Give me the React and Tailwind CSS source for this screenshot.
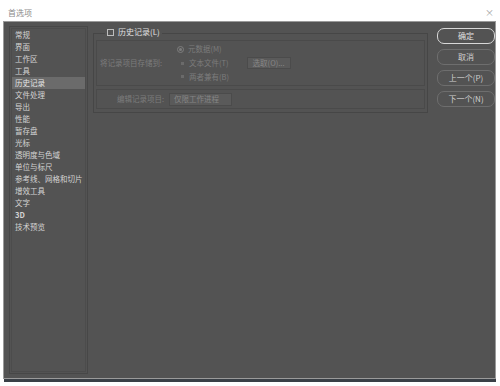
import React from "react";

const items = [
  "常规", "界面", "工作区", "工具", "历史记录", "文件处理", "导出", "性能", "暂存盘",
  "光标", "透明度与色域", "单位与标尺", "参考线、网格和切片", "增效工具", "文字", "3D", "技术预览",
];

const font = { fontFamily: '"Noto Sans CJK SC", "Noto Sans", sans-serif' };

function SideButton({ children, primary }) {
  return (
    <div
      className={`h-[16px] w-[58px] rounded-[7px] border flex items-center justify-center text-[8px] leading-none ${
        primary ? "border-[#d8d8d8] text-[#e0e0e0]" : "border-[#6e6e6e] text-[#d0d0d0]"
      }`}
    >
      {children}
    </div>
  );
}

export default function App() {
  return (
    <div className="w-[500px] h-[386px] bg-white relative overflow-hidden" style={font}>
      <div className="h-[21px] flex items-center justify-between pl-[8px] pr-[6px]">
        <span className="text-[8px] text-[#8a8a8a] leading-none mt-[4px]">首选项</span>
        <span className="text-[9px] text-[#a0a0a0] leading-none mt-[4px]">×</span>
      </div>

      <div className="ml-[3px] mr-[4px] h-[358px] bg-[#535353] border border-[#9a9a9a] flex">
        {/* left list */}
        <div className="ml-[5px] mt-[4px] w-[79px] h-[348px] border border-[#474747] p-[1px]">
          <div className="w-full h-full border border-[#4c4c4c] flex flex-col">
            {items.map((it) => (
              <div
                key={it}
                className={`h-[12px] flex items-center pl-[3px] text-[7.5px] leading-none ${
                  it === "历史记录" ? "bg-[#6b6b6b] text-[#e6e6e6]" : "text-[#d4d4d4]"
                } ${it === "3D" ? "font-bold" : ""}`}
              >
                {it}
              </div>
            ))}
          </div>
        </div>

        {/* main */}
        <div className="ml-[5px] mt-[11px] w-[335px] h-[80px] border border-[#464646] relative">
          <div className="absolute -top-[6px] left-[11px] bg-[#535353] px-[2px] flex items-center gap-[4px]">
            <div className="w-[7px] h-[7px] border border-[#bdbdbd]" />
            <span className="text-[8px] text-[#e0e0e0] leading-none">历史记录(L)</span>
          </div>

          <div className="mx-[2px] mt-[6px] h-[46px] border border-[#4a4a4a] relative">
            <div className="flex items-center gap-[4px] ml-[80px] mt-[3px] h-[10px]">
              <div className="w-[7px] h-[7px] rounded-full border border-[#7e7e7e] flex items-center justify-center">
                <div className="w-[3px] h-[3px] rounded-full bg-[#7e7e7e]" />
              </div>
              <span className="text-[7.5px] text-[#7c7c7c] leading-none">元数据(M)</span>
            </div>
            <div className="flex items-center h-[14px] mt-[2px]">
              <span className="ml-[3px] w-[79px] text-[7.5px] text-[#7c7c7c] leading-none">将记录项目存储到:</span>
              <div className="w-[3px] h-[3px] bg-[#6a6a6a] ml-[2px]" />
              <span className="ml-[5px] text-[7.5px] text-[#7c7c7c] leading-none">文本文件(T)</span>
              <div className="ml-[18px] w-[44px] h-[12px] bg-[#5a5a5a] border border-[#4b4b4b] flex items-center justify-center text-[7.5px] text-[#888] leading-none">
                选取(O)...
              </div>
            </div>
            <div className="flex items-center h-[11px] mt-[1px]">
              <div className="ml-[84px] w-[3px] h-[3px] bg-[#6a6a6a]" />
              <span className="ml-[5px] text-[7.5px] text-[#7c7c7c] leading-none">两者兼有(B)</span>
            </div>
          </div>

          <div className="mx-[2px] mt-[3px] h-[20px] border border-[#4a4a4a] flex items-center">
            <span className="ml-[20px] text-[7.5px] text-[#7c7c7c] leading-none">编辑记录项目:</span>
            <div className="ml-[5px] w-[63px] h-[13px] bg-[#5a5a5a] border border-[#4b4b4b] flex items-center pl-[4px] text-[7.5px] text-[#868686] leading-none">
              仅限工作进程
            </div>
          </div>
        </div>

        {/* buttons */}
        <div className="ml-[9px] mt-[6px] flex flex-col gap-[5px]">
          <SideButton primary>确定</SideButton>
          <SideButton>取消</SideButton>
          <SideButton>上一个(P)</SideButton>
          <SideButton>下一个(N)</SideButton>
        </div>
      </div>

      <div className="ml-[4px] mr-[4px] h-[3px] bg-[#3a4047]" />
    </div>
  );
}
